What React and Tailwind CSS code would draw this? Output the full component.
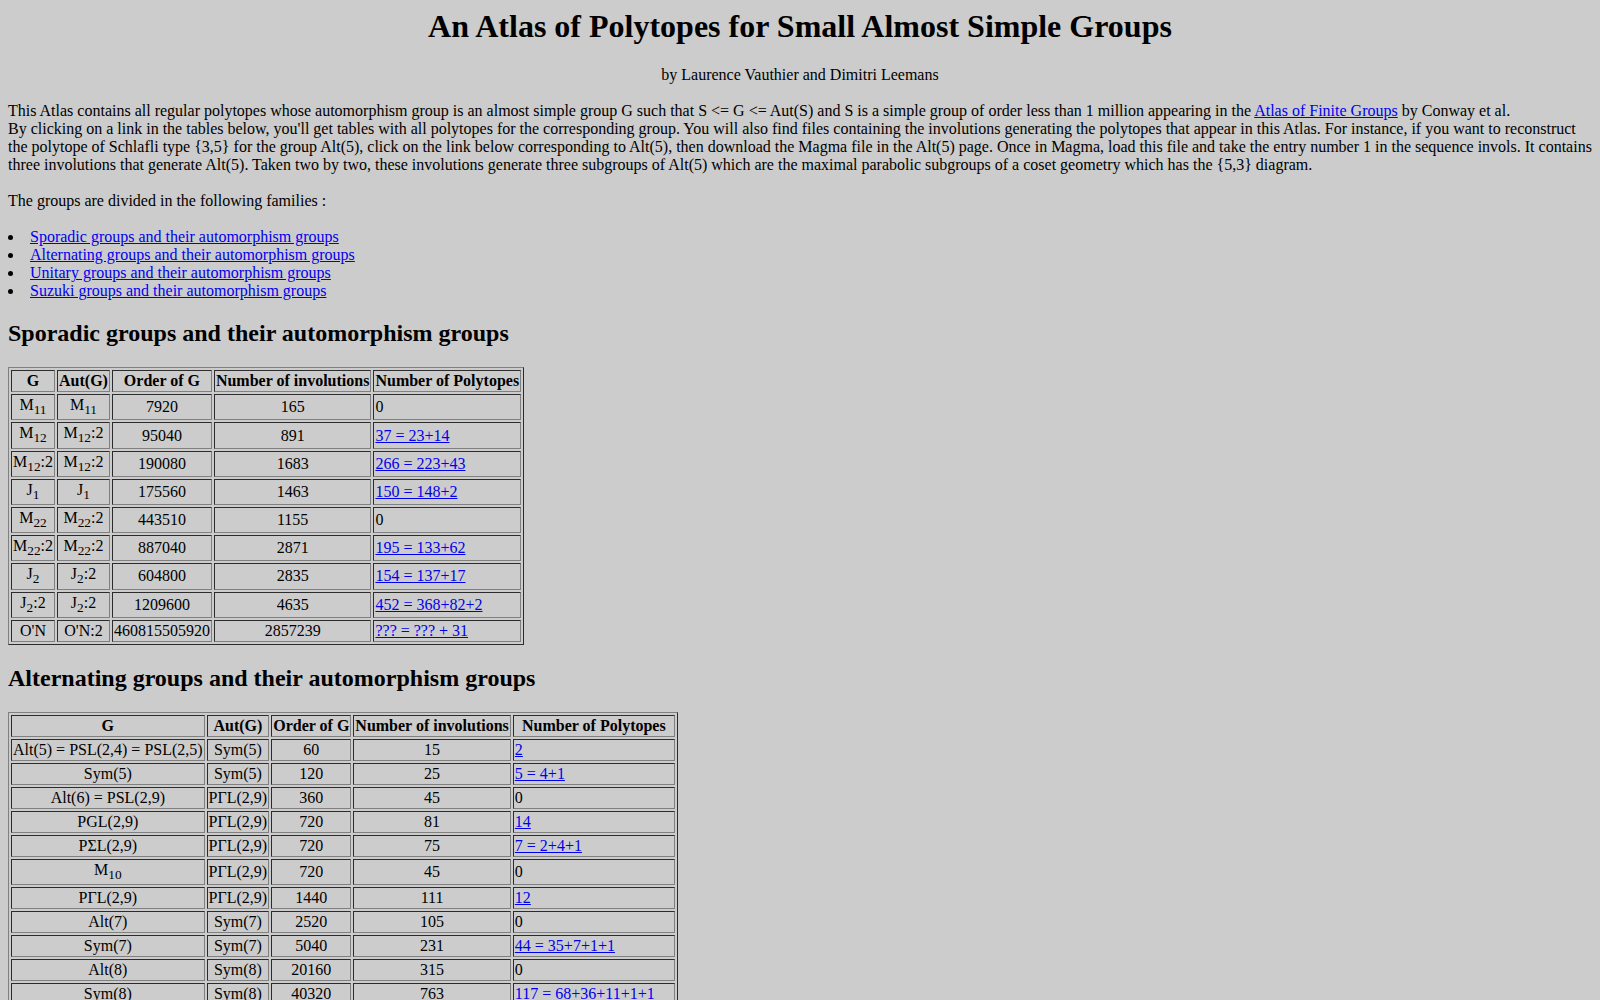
import React from 'react';

// rows: [G, Aut(G), order, involutions, polytopes, link?]
// a group name is either a plain string or [base, subscript, suffix]
const sporadic = [
  [['M', '11', ''], ['M', '11', ''], '7920', '165', '0', false],
  [['M', '12', ''], ['M', '12', ':2'], '95040', '891', '37 = 23+14', true],
  [['M', '12', ':2'], ['M', '12', ':2'], '190080', '1683', '266 = 223+43', true],
  [['J', '1', ''], ['J', '1', ''], '175560', '1463', '150 = 148+2', true],
  [['M', '22', ''], ['M', '22', ':2'], '443510', '1155', '0', false],
  [['M', '22', ':2'], ['M', '22', ':2'], '887040', '2871', '195 = 133+62', true],
  [['J', '2', ''], ['J', '2', ':2'], '604800', '2835', '154 = 137+17', true],
  [['J', '2', ':2'], ['J', '2', ':2'], '1209600', '4635', '452 = 368+82+2', true],
  ["O'N", "O'N:2", '460815505920', '2857239', '??? = ??? + 31', true],
];

const alternating = [
  ['Alt(5) = PSL(2,4) = PSL(2,5)', 'Sym(5)', '60', '15', '2', true],
  ['Sym(5)', 'Sym(5)', '120', '25', '5 = 4+1', true],
  ['Alt(6) = PSL(2,9)', 'PΓL(2,9)', '360', '45', '0', false],
  ['PGL(2,9)', 'PΓL(2,9)', '720', '81', '14', true],
  ['PΣL(2,9)', 'PΓL(2,9)', '720', '75', '7 = 2+4+1', true],
  [['M', '10', ''], 'PΓL(2,9)', '720', '45', '0', false],
  ['PΓL(2,9)', 'PΓL(2,9)', '1440', '111', '12', true],
  ['Alt(7)', 'Sym(7)', '2520', '105', '0', false],
  ['Sym(7)', 'Sym(7)', '5040', '231', '44 = 35+7+1+1', true],
  ['Alt(8)', 'Sym(8)', '20160', '315', '0', false],
  ['Sym(8)', 'Sym(8)', '40320', '763', '117 = 68+36+11+1+1', true],
];

const link = 'text-[#0000ee] underline';
const cell =
  'p-px border border-t-[#2c2c2c] border-l-[#2c2c2c] border-r-[#808080] border-b-[#808080] align-middle';
const headers = ['G', 'Aut(G)', 'Order of G', 'Number of involutions', 'Number of Polytopes'];

function Group({ name }) {
  if (typeof name === 'string') return name;
  const [base, sub, suffix] = name;
  return (
    <>
      {base}
      <sub className="static align-sub text-[13.333px] leading-[normal]">{sub}</sub>
      {suffix}
    </>
  );
}

function GroupTable({ rows, lastCol = '' }) {
  return (
    <table className="border-separate border-spacing-[2px] border border-t-[#808080] border-l-[#808080] border-r-[#2c2c2c] border-b-[#2c2c2c]">
      <tbody>
        <tr>
          {headers.map((h, i) => (
            <th key={h} className={`${cell} text-center font-bold ${i === 4 ? lastCol : ''}`}>
              {h}
            </th>
          ))}
        </tr>
        {rows.map((r, i) => (
          <tr key={i}>
            <td className={`${cell} text-center`}>
              <Group name={r[0]} />
            </td>
            <td className={`${cell} text-center`}>
              <Group name={r[1]} />
            </td>
            <td className={`${cell} text-center`}>{r[2]}</td>
            <td className={`${cell} text-center`}>{r[3]}</td>
            <td className={`${cell} text-left`}>
              {r[5] ? (
                <a href="#" className={link}>
                  {r[4]}
                </a>
              ) : (
                r[4]
              )}
            </td>
          </tr>
        ))}
      </tbody>
    </table>
  );
}

export default function App() {
  return (
    <div className="min-h-screen bg-[#cccccc] p-2 font-['Liberation_Serif',serif] text-[16px] leading-[normal] text-black">
      <h1 className="mb-[21.44px] text-center text-[32px] font-bold leading-[normal]">
        An Atlas of Polytopes for Small Almost Simple Groups
      </h1>
      <p className="text-center">by Laurence Vauthier and Dimitri Leemans</p>
      <p className="mt-[18px] mb-[18px]">
        This Atlas contains all regular polytopes whose automorphism group is an almost simple group G such
        that S &lt;= G &lt;= Aut(S) and S is a simple group of order less than 1 million appearing in the{' '}
        <a href="#" className={link}>
          Atlas of Finite Groups
        </a>{' '}
        by Conway et al.
        <br />
        By clicking on a link in the tables below, you'll get tables with all polytopes for the corresponding
        group. You will also find files containing the involutions generating the polytopes that appear in this
        Atlas. For instance, if you want to reconstruct the polytope of Schlafli type {'{3,5}'} for the group
        Alt(5), click on the link below corresponding to Alt(5), then download the Magma file in the Alt(5)
        page. Once in Magma, load this file and take the entry number 1 in the sequence invols. It contains
        three involutions that generate Alt(5). Taken two by two, these involutions generate three subgroups of
        Alt(5) which are the maximal parabolic subgroups of a coset geometry which has the {'{5,3}'} diagram.
      </p>
      <p className="mb-[18px]">The groups are divided in the following families :</p>
      <ul className="mb-4 list-inside list-disc pl-0">
        <li>
          <a href="#sporadic" className={link}>
            Sporadic groups and their automorphism groups
          </a>
        </li>
        <li>
          <a href="#alternating" className={link}>
            Alternating groups and their automorphism groups
          </a>
        </li>
        <li>
          <a href="#unitary" className={link}>
            Unitary groups and their automorphism groups
          </a>
        </li>
        <li>
          <a href="#suzuki" className={link}>
            Suzuki groups and their automorphism groups
          </a>
        </li>
      </ul>
      <h2 id="sporadic" className="my-[19.92px] text-[24px] font-bold leading-[normal]">
        Sporadic groups and their automorphism groups
      </h2>
      <GroupTable rows={sporadic} />
      <h2 id="alternating" className="my-[19.92px] text-[24px] font-bold leading-[normal]">
        Alternating groups and their automorphism groups
      </h2>
      <GroupTable rows={alternating} lastCol="w-[162px]" />
    </div>
  );
}
